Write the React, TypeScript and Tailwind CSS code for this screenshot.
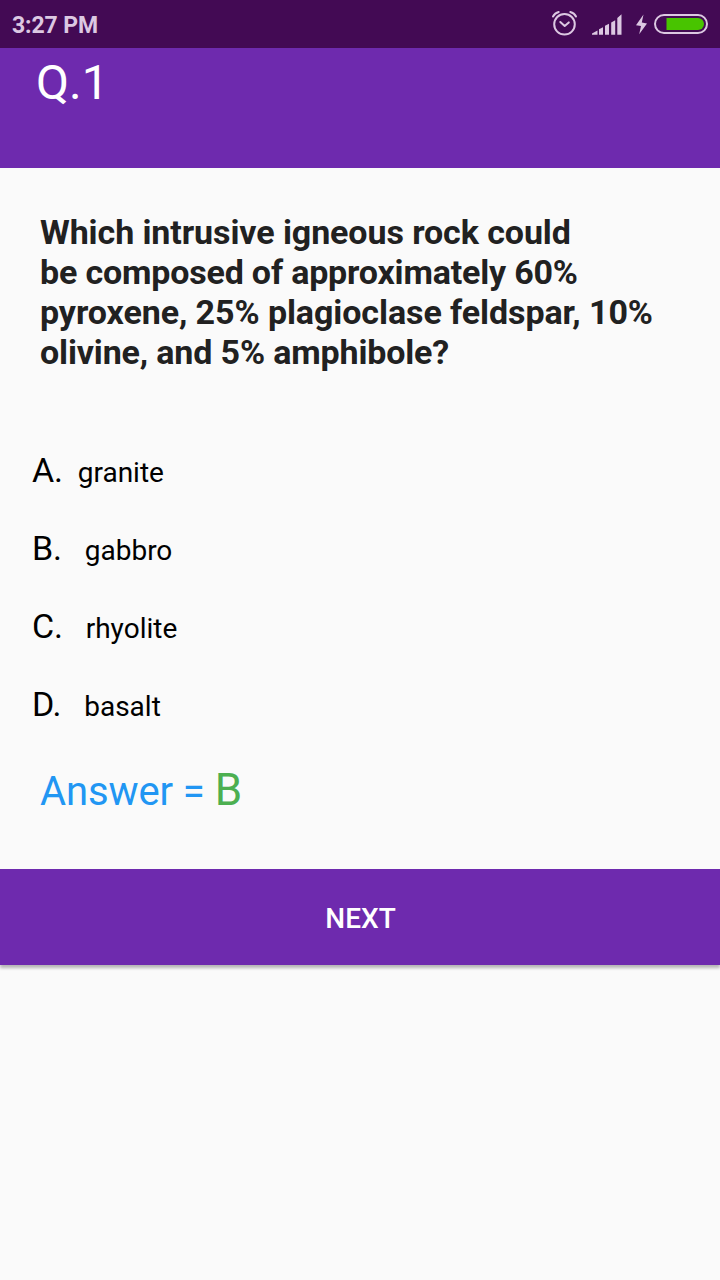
interface OptionProps {
  letter: string;
  text: string;
  gap: string;
}

const OPTIONS: OptionProps[] = [
  { letter: "A.", text: "granite", gap: "pl-[15px]" },
  { letter: "B.", text: "gabbro", gap: "pl-[23px]" },
  { letter: "C.", text: "rhyolite", gap: "pl-[23px]" },
  { letter: "D.", text: "basalt", gap: "pl-[23px]" },
];

const QUESTION = [
  { text: "Which intrusive igneous rock could", tracking: "tracking-[-0.09px]" },
  { text: "be composed of approximately 60%", tracking: "tracking-[-0.18px]" },
  { text: "pyroxene, 25% plagioclase feldspar, 10%", tracking: "tracking-[-0.08px]" },
  { text: "olivine, and 5% amphibole?", tracking: "tracking-[-0.15px]" },
];

function StatusBar() {
  return (
    <div className="flex h-12 items-center justify-between bg-[#430a54] pl-3 text-[#dcc8e2]">
      <span className="pt-0.5 text-[23px] leading-none font-bold tracking-[-0.1px]">3:27 PM</span>
      <svg className="h-12 w-[180px]" viewBox="0 0 180 48" fill="none">
        <g stroke="currentColor" strokeWidth="2" strokeLinecap="round" strokeLinejoin="round">
          <circle cx="24.5" cy="24.3" r="10.3" />
          <path d="M20.3 22l4.4 3.9 4.1-3.5" />
          <path d="M13 16.5Q14.8 13 18.7 12M30.3 12q4 1 5.7 4.5" />
        </g>
        <g fill="currentColor">
          <path d="M52 34.7v-1.2l5.5-3v4.2z" />
          <path d="M59 34.7v-5.5l4-1.9v7.4zM65 34.7v-8.9l4-2v10.9zM71.2 34.7V22.4l4-2.1v14.4zM77.3 34.7V18l4.2-3.7v20.4z" />
          <path d="M103.5 14.5L96 25.3l5 .7-1.8 8.2 7.8-10.8-5.2-.8z" />
        </g>
        <rect x="115" y="15" width="52" height="18" rx="9" stroke="currentColor" strokeWidth="2" />
        <path d="M126.5 18H158a6 6 0 0 1 0 12h-31.5z" fill="#48c400" />
      </svg>
    </div>
  );
}

function Option(props: OptionProps) {
  return (
    <div className="flex h-[78px] items-baseline pl-8 text-black">
      <span className="text-[34px] leading-[78px] tracking-[-0.2px]">{props.letter}</span>
      <span className={`text-[28px] ${props.gap}`}>{props.text}</span>
    </div>
  );
}

function App() {
  return (
    <div className="flex min-h-screen w-full flex-col bg-[#fafafa] font-['Roboto',sans-serif]">
      <StatusBar />
      <header className="h-[120px] bg-[#6e2aae] pt-[7px] pl-9 text-white">
        <h1 className="text-[48px] leading-[56px]">Q.1</h1>
      </header>
      <main className="pt-11">
        <h2 className="h-[219px] px-10 text-[34px] leading-10 font-bold text-[#212121]">
          {QUESTION.map((line) => (
            <span key={line.text} className={`block whitespace-nowrap ${line.tracking}`}>
              {line.text}
            </span>
          ))}
        </h2>
        {OPTIONS.map((item) => (
          <Option key={item.letter} {...item} />
        ))}
        <p className="flex h-[126px] items-baseline gap-2.5 pt-[17px] pl-10">
          <span className="text-[40px] leading-[60px] tracking-[-0.1px] text-[#2196f3]">Answer =</span>
          <span className="text-[44px] leading-[60px] text-[#4caf50]">B</span>
        </p>
      </main>
      <button className="h-24 w-full bg-[#6e2aae] pt-1 pl-px text-[28px] font-medium text-white shadow-[0_3px_3px_rgba(0,0,0,0.28)]">
        NEXT
      </button>
    </div>
  );
}

export default App;
